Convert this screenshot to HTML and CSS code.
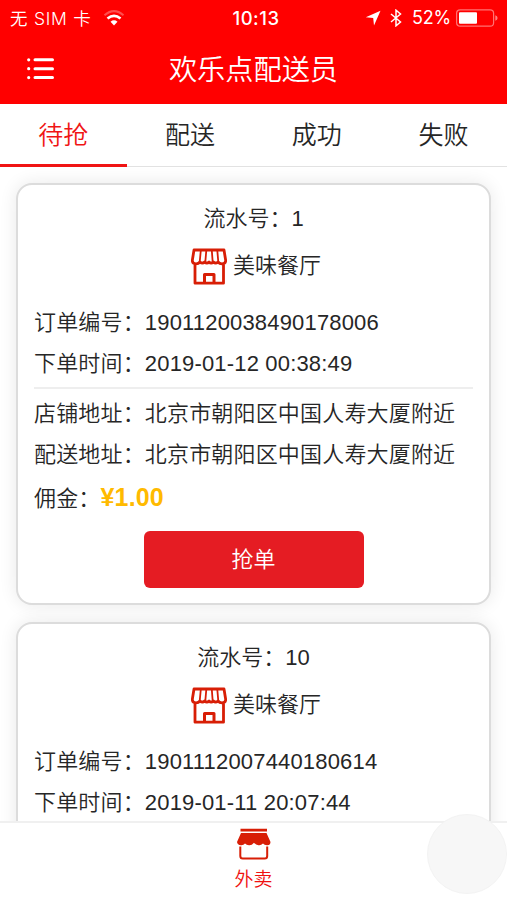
FILE: index.html
```html
<!DOCTYPE html>
<html lang="zh-CN">
<head>
<meta charset="utf-8">
<meta name="viewport" content="width=device-width, initial-scale=1">
<title>欢乐点配送员</title>
<link rel="stylesheet" href="styles.css">
</head>
<body>
<svg class="sprite" aria-hidden="true">
  <symbol id="shop" viewBox="0 0 36 37">
    <g fill="none" stroke="#d81e06" stroke-linejoin="round">
      <path stroke-width="2.800" d="M4 15V35.200H32.500V15M3 2H33L34.700 12.500Q34.500 15.800 31 15.800Q28.500 15.800 27 14Q24.500 16.200 22.500 14Q20 16.200 18 14Q16 16.200 13.500 14Q11.500 16.200 9 14Q7.500 15.800 5 15.800Q1.500 15.800 1.300 12.500Z"/>
      <path stroke-width="1.800" d="M9.800 2.500L8.700 14M15.300 2.500L14.300 14M20.800 2.500L21.700 14M26.300 2.500L27.300 14"/>
      <path stroke-width="3" d="M13.500 35V26.500H23V35"/>
    </g>
  </symbol>
</svg>
<div class="app">
  <header class="header">
    <div class="status">
      <div class="status-left">
        <span class="carrier">无 SIM 卡</span>
        <svg class="wifi" width="22" height="16" viewBox="0 0 22 16">
          <path d="M1.500 5.200Q11-3 20.500 5.200" fill="none" stroke="#fff" stroke-opacity=".3" stroke-width="2"/>
          <path d="M4.500 8.600Q11 3 17.500 8.600" fill="none" stroke="#fff" stroke-width="2.600"/>
          <path d="M7.500 11.700Q11 9 14.500 11.700L11 15.500Z" fill="#fff"/>
        </svg>
      </div>
      <span class="clock">10:13</span>
      <div class="status-right">
        <svg width="16" height="16" viewBox="0 0 16 16"><path d="M15.500.8L9 15.500L8.200 8L.8 7.200Z" fill="#fff"/></svg>
        <svg class="bluetooth" width="12" height="18" viewBox="0 0 12 18"><path d="M1 5L10.500 13L6 16.800V1.200L10.500 5L1 13" fill="none" stroke="#fff" stroke-width="1.500"/></svg>
        <span class="percent">52%</span>
        <svg class="battery" width="42" height="18" viewBox="0 0 42 18">
          <rect x=".6" y=".8" width="37" height="16.400" rx="3.500" fill="none" stroke="#fff" stroke-opacity=".45" stroke-width="1.200"/>
          <rect x="3" y="3.300" width="18" height="11.400" rx="1" fill="#fff"/>
          <path d="M39.300 6.200Q41.600 7 41.600 9T39.300 11.800Z" fill="#fff" fill-opacity=".5"/>
        </svg>
      </div>
    </div>
    <div class="navbar">
      <svg width="28" height="24" viewBox="0 0 28 24" stroke="#fff" stroke-linecap="round">
        <path stroke-width="3" d="M8 2.800H25.500M8 11.700H25.500M8 20.600H25.500"/>
        <path stroke-width="3.200" d="M1.700 2.800h.01M1.700 11.700h.01M1.700 20.600h.01"/>
      </svg>
      <h1 class="title">欢乐点配送员</h1>
    </div>
  </header>
  <nav class="tabs">
    <a class="tab active">待抢</a>
    <a class="tab">配送</a>
    <a class="tab">成功</a>
    <a class="tab">失败</a>
  </nav>
  <main class="orders">
    <article class="card">
      <div class="serial">流水号：1</div>
      <div class="shop"><svg width="36" height="37"><use href="#shop"/></svg><span>美味餐厅</span></div>
      <div class="group">
        <p class="row">订单编号：1901120038490178006</p>
        <p class="row">下单时间：2019-01-12 00:38:49</p>
      </div>
      <div class="group address">
        <p class="row">店铺地址：北京市朝阳区中国人寿大厦附近</p>
        <p class="row">配送地址：北京市朝阳区中国人寿大厦附近</p>
      </div>
      <p class="fee">佣金：<b class="price">¥1.00</b></p>
      <button class="grab">抢单</button>
    </article>
    <article class="card">
      <div class="serial">流水号：10</div>
      <div class="shop"><svg width="36" height="37"><use href="#shop"/></svg><span>美味餐厅</span></div>
      <div class="group">
        <p class="row">订单编号：1901112007440180614</p>
        <p class="row">下单时间：2019-01-11 20:07:44</p>
      </div>
    </article>
  </main>
  <footer class="tabbar">
    <svg width="36" height="33" viewBox="0 0 36 33">
      <path d="M4.500.8H31V3.600H4.500ZM5 5H30.500L34.500 14Q34.300 17.500 31 17.300Q28.300 17.200 27 15.500Q25 17.600 22.500 17.200Q20 17 18 14.800Q15.800 17.500 13 17.300Q10.500 17.200 9 15.500Q7.500 17.500 5 17.300Q1.300 17 1 14Z" fill="#d81e06"/>
      <path d="M4.300 18.500V28Q4.300 30.500 6.800 30.500H28.700Q31.200 30.500 31.200 28V18.500" fill="none" stroke="#d81e06" stroke-width="2"/>
    </svg>
    <span>外卖</span>
  </footer>
  <div class="float"></div>
</div>
</body>
</html>
```

FILE: styles.css
```css
* { box-sizing: border-box; }
body {
  margin: 0;
  font-family: "Liberation Sans", "Noto Sans CJK SC", sans-serif;
  font-size: 22px;
  font-weight: 350;
  color: #262626;
  background: #fff;
}
.sprite { position: absolute; width: 0; height: 0; }
.app {
  position: relative;
  display: flex;
  flex-direction: column;
  height: 900px;
  overflow: hidden;
}
.header { height: 104px; flex: none; background: #f00; color: #fff; }
.status {
  display: grid;
  grid-template-columns: 1fr auto 1fr;
  align-items: center;
  height: 35px;
  padding: 0 9px 0 10px;
  font-family: Inter, "Noto Sans CJK SC", sans-serif;
  font-size: 18px;
}
.status-left, .status-right { display: flex; align-items: center; }
.status-left { gap: 11px; }
.carrier { font-size: 17.5px; white-space: nowrap; letter-spacing: .75px; }
.clock { font-weight: 500; font-size: 18.5px; letter-spacing: .5px; padding-left: 4px; }
.status-right { justify-content: flex-end; }
.bluetooth { margin: 0 10px 0 9px; }
.percent { font-size: 18px; font-weight: 400; margin-right: 5px; letter-spacing: -.2px; }
.navbar {
  display: grid;
  grid-template-columns: 28px 1fr 28px;
  align-items: center;
  height: 67px;
  padding: 0 27px;
}
.title { margin: 0; padding-top: 2px; font-size: 28.2px; font-weight: 350; line-height: 40px; text-align: center; }
.tabs {
  display: flex;
  flex: none;
  height: 63px;
  border-bottom: 1px solid #e2e2e2;
}
.tab { flex: 1; height: 63px; padding-top: 2px; text-align: center; font-size: 25px; line-height: 59px; }
.tab.active { color: #f01414; border-bottom: 3px solid #f01414; }
.orders {
  display: flex;
  flex-direction: column;
  gap: 17px;
  flex: 1;
  min-height: 0;
  overflow: hidden;
  padding: 16px 16px 0;
}
.card {
  flex: none;
  height: 422px;
  padding: 12px 16px 0 16px;
  border: 2px solid #dcdcdc;
  border-radius: 16px;
  background: #fff;
  box-shadow: 0 0 18px rgba(0, 0, 0, .09);
}
.serial { height: 42px; line-height: 43px; text-align: center; }
.shop { display: flex; justify-content: center; align-items: center; gap: 6px; height: 52px; padding: 2px 0 0 5px; line-height: 54px; }
.group { padding-top: 11px; height: 98px; border-bottom: 2px solid #eee; }
.address { padding-top: 4px; height: 86px; border: 0; }
.row { margin: 0; height: 41px; line-height: 41px; white-space: nowrap; letter-spacing: .17px; }
.fee { margin: 0; height: 44px; line-height: 44px; letter-spacing: .17px; }
.price { color: #ffba00; font-size: 25px; }
.grab {
  display: block;
  width: 220px;
  height: 57px;
  margin: 12px auto 0;
  padding: 0;
  border: 0;
  border-radius: 6px;
  background: #e51c23;
  color: #fff;
  font: inherit;
  line-height: 58px;
}
.tabbar {
  display: flex;
  flex: none;
  flex-direction: column;
  align-items: center;
  height: 79px;
  padding-top: 5px;
  border-top: 2px solid #f0f0f0;
  background: #fff;
  color: #ef1111;
  font-size: 19px;
  line-height: 38px;
}
.float {
  position: absolute;
  right: 0;
  bottom: 6px;
  width: 80px;
  height: 80px;
  border: 1px solid #f3f3f3;
  border-radius: 50%;
  background: rgba(247, 247, 247, .95);
}
```
